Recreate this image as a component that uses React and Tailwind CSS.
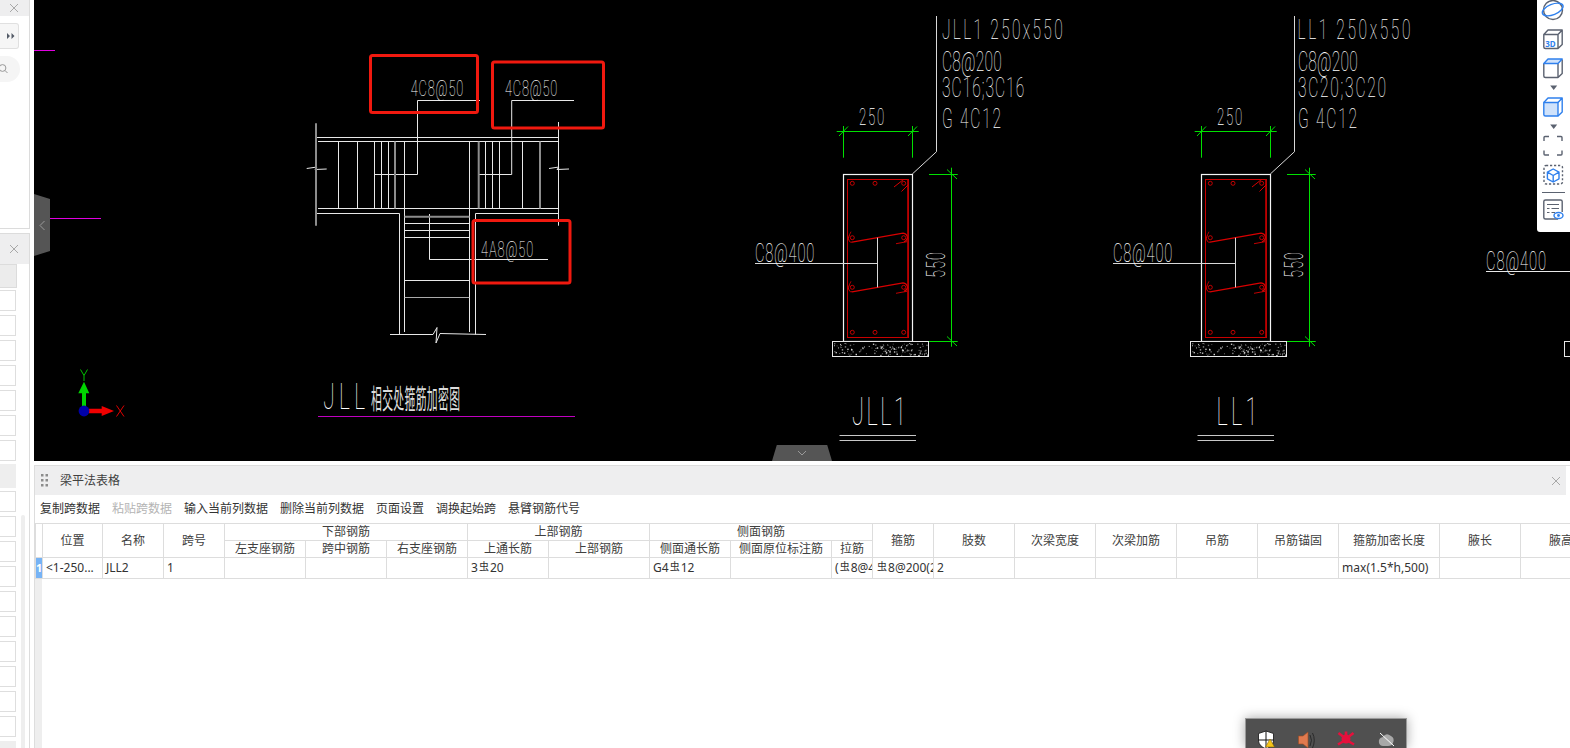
import React from "react";

const W = "#e8e8e8";
const G = "#00e000";
const R = "#d80000";

function T({ x, y, w, h, children, fill = "#ffffff", rotate = 0, weight = 100, s = 0.56, family = "Roboto, 'Noto Sans CJK SC', sans-serif" }) {
  const size = h / 0.72;
  return (
    <text
      x={0}
      y={0}
      fontSize={size}
      fill={fill}
      fontWeight={weight}
      fontFamily={family}
      textLength={w / s}
      lengthAdjust="spacing"
      transform={`translate(${x} ${y}) rotate(${rotate}) scale(${s} 1)`}
    >
      {children}
    </text>
  );
}

const speckle = Array.from({ length: 130 }, (_, i) => {
  const a = Math.abs(Math.sin(i * 12.9898) * 43758.5453) % 1;
  const b = Math.abs(Math.sin(i * 78.233) * 12543.123) % 1;
  return { x: 834 + a * 93, y: 343 + b * 12, s: i % 3 === 0 ? 1.4 : 0.9, o: 0.4 + (i % 5) * 0.12 };
});

function Tie({ y }) {
  return (
    <g fill="none" stroke={R}>
      <path d={`M852 ${y + 4.5} L903 ${y - 4.5} Q907 ${y - 4} 907.5 ${y} Q907 ${y + 3} 904 ${y + 4}`} strokeWidth="1.2" />
      <path d={`M849.5 ${y - 3} Q847.5 ${y + 1} 849 ${y + 3} Q850.5 ${y + 5} 852 ${y + 4.5}`} strokeWidth="1" />
      <path d={`M851 ${y - 6} L849.5 ${y - 3}`} strokeWidth="0.8" />
      <path d={`M896 ${y + 6} L907 ${y + 4}`} strokeWidth="0.9" />
      <circle cx="852.3" cy={y} r="2" strokeWidth="0.9" />
      <circle cx="903.7" cy={y} r="2" strokeWidth="0.9" />
    </g>
  );
}

function Section() {
  return (
    <g>
      <g stroke={G} fill="none" strokeWidth="1">
        <path d="M836.7 131.5H918.7M843.5 126V157.7M912.5 126V157.7M839 136L848 126.5M908 136L917 126.5" />
        <path d="M951.5 167.7V346.7M929 174.5H957.7M929 341.5H957.7M947 169.5L957 179M947 336.5L957 346" />
      </g>
      <path d="M936.5 16V151.7L912.3 174" stroke="#d8d8d8" strokeWidth="1" fill="none" />
      <rect x="843.5" y="174.5" width="69" height="167" stroke="#f4f4f4" strokeWidth="1.2" fill="none" />
      <rect x="847.5" y="179.5" width="61" height="158" stroke="#c80000" strokeWidth="1" fill="none" />
      <path d="M907.8 179.5V337.5" stroke="#b00000" strokeWidth="1.4" />
      <g stroke={R} fill="none" strokeWidth="0.9">
        {[852.3, 875, 903.7].map((x) => (
          <g key={x}>
            <circle cx={x} cy="183.3" r="2" />
            <circle cx={x} cy="332.3" r="2" />
          </g>
        ))}
        <path d="M894 187L903.5 179.5M901.5 191.5L908.5 184.5" strokeWidth="1" />
      </g>
      <Tie y={237.7} />
      <Tie y={287.3} />
      <path d="M755 263.5H877.3M877.5 237.7V287.3" stroke="#d8d8d8" strokeWidth="1" fill="none" />
      <rect x="832.5" y="341.5" width="96" height="15" stroke="#e8e8e8" fill="#000" strokeWidth="1" />
      {speckle.map((d, i) => (
        <rect key={i} x={d.x} y={d.y} width={d.s} height={d.s} fill="#fff" opacity={d.o} />
      ))}
      <path d="M839.5 435.5H916M839.5 440.5H916" stroke="#c8c8c8" strokeWidth="1" />
      <T x={859} y={125} w={25.3} h={17}>250</T>
      <T x={945} y={277.7} w={25.4} h={18} rotate={-90}>550</T>
      <T x={755} y={262} w={59.3} h={19}>C8@400</T>
    </g>
  );
}

function Cad() {
  return (
    <svg width="1536" height="461" viewBox="34 0 1536 461" className="block">
      <path d="M34 50.5H55M50 218.5H101" stroke="#e000e0" strokeWidth="1" />
      <g stroke={W} strokeWidth="1" fill="none">
        <path d="M417.5 100.5H480M417.5 100.5V174.5H374.3M511.7 100.5H574M511.7 100.5V174.5H479" />
        <path d="M429.5 259.5H548M429.5 214V259.5" />
        <path d="M316 137.5H558.3M318 141.5H558.3M318 208.5H558.3M558.5 122V225.7" />
        <path d="M338.5 141.5V208.5M357.5 141.5V208.5M374.5 141.5V208.5M381.5 141.5V208.5M388.5 141.5V208.5M485.5 141.5V208.5M492.5 141.5V208.5M499.5 141.5V208.5M522.5 141.5V208.5" />
        <path d="M404.5 141.5V332M469.5 141.5V332" />
        <path d="M316 213.5H399.5V334.5M475.5 334.5V213.5H558.3" />
        <path d="M404.5 223.5H469.5M404.5 230.5H469.5M404.5 237.5H469.5M404.5 280.5H469.5" />
        <path d="M390 334.5H433L437 327.5L436 343L440 333.5L486 334.5" />
        <path d="M306.7 168.5L317 167L315 169.5L326.7 169M549 168.5L559 167L557 169.5L569 169" />
      </g>
      <g stroke="#8c8c8c" strokeWidth="2" fill="none">
        <path d="M316 123.3V225.7M395 141.5V208.5M478.7 141.5V208.5M540 141.5V208.5M404.5 216.8H469.5" />
      </g>
      <path d="M404.5 297.5H469.5" stroke="#aaa" strokeWidth="1" />
      <g stroke="#f0190f" strokeWidth="3" fill="none">
        <rect x="370.5" y="55.5" width="107" height="57" rx="2" />
        <rect x="492.5" y="62" width="111" height="66" rx="2" />
        <rect x="473" y="220.5" width="97" height="62.5" rx="2" />
      </g>
      <T x={410.7} y={96} w={52.6} h={16.5}>4C8@50</T>
      <T x={505} y={96} w={52.3} h={16.5}>4C8@50</T>
      <T x={481} y={257} w={52.3} h={16.5}>4A8@50</T>
      <T x={323.3} y={409.3} w={41.7} h={27}>JLL</T>
      <T x={371} y={408.5} w={89} h={20} s={0.39} fill="#dcdcdc" weight={400}>相交处箍筋加密图</T>
      <path d="M318 416.5H575" stroke="#c000c0" strokeWidth="1" />

      <Section />
      <T x={942} y={39.3} w={120.7} h={20}>JLL1 250x550</T>
      <T x={942} y={71} w={59.7} h={20}>C8@200</T>
      <T x={942} y={96.7} w={82.3} h={20}>3C16;3C16</T>
      <T x={942} y={128} w={59} h={20}>G 4C12</T>
      <T x={852} y={425} w={54} h={28}>JLL1</T>

      <g transform="translate(358 0)">
        <Section />
      </g>
      <T x={1297.5} y={39.3} w={113} h={20}>LL1 250x550</T>
      <T x={1298} y={71} w={59.7} h={20}>C8@200</T>
      <T x={1298} y={96.7} w={88} h={20}>3C20;3C20</T>
      <T x={1298} y={128} w={59} h={20}>G 4C12</T>
      <T x={1216.5} y={425} w={41} h={28}>LL1</T>

      <T x={1486} y={270} w={60} h={19}>C8@400</T>
      <path d="M1486 271.5H1570" stroke="#e8e8e8" strokeWidth="1" />
      <rect x="1564.5" y="341.5" width="20" height="15" stroke="#e8e8e8" fill="none" />

      <path d="M84 381.7L89.3 393.3H86V406H82V393.3H78.3Z" fill="#00d400" />
      <path d="M89 408.8H101.7V406L114 411L101.7 416V413.2H89Z" fill="#f00000" />
      <circle cx="84" cy="411" r="5.4" fill="#0000a8" />
      <path d="M80.5 369.5L84 375.5L87.5 369.5M84 375.5V381" stroke="#00c000" strokeWidth="1" fill="none" />
      <path d="M116.5 405.5L124 416.5M124 405.5L116.5 416.5" stroke="#e00000" strokeWidth="1" fill="none" />
    </svg>
  );
}

function ToolIcons() {
  const gray = "#5b6270";
  const blue = "#2f80ed";
  return (
    <svg width="33" height="232" viewBox="1537 0 33 232" className="block">
      <g fill="none" strokeWidth="1.4" strokeLinejoin="round">
        <circle cx="1553" cy="10" r="9.5" stroke={gray} />
        <ellipse cx="1552.7" cy="9.5" rx="11" ry="5.2" transform="rotate(-22 1552.7 9.5)" stroke={blue} />

        <path d="M1543.8 34.5L1548 30H1562.2V44.5L1558 48.5H1545.5Q1543.8 48.5 1543.8 47ZM1543.8 34.5H1558V48.5M1558 34.5L1562.2 30" stroke={gray} />

        <path d="M1543.8 63.5V76Q1543.8 77.5 1545.5 77.5H1558V63.5M1558 77.5L1562.2 73.5V59.5" stroke={gray} />
        <path d="M1543.8 63.5L1548 59H1562.2L1558 63.5Z" stroke={blue} fill="#cfe2fb" />

        <path d="M1543.8 102.5H1558V116H1545.5Q1543.8 116 1543.8 114.5Z" stroke={blue} fill="#cfe2fb" />
        <path d="M1543.8 102.5L1548 98H1562.2V112L1558 116M1558 102.5L1562.2 98" stroke={blue} />

        <path d="M1544 141V137.5Q1544 136.5 1545 136.5H1549M1557 136.5H1561Q1562 136.5 1562 137.5V141M1562 150.5V154Q1562 155 1561 155H1557M1549 155H1545Q1544 155 1544 154V150.5" stroke={gray} />

        <rect x="1544" y="165.5" width="18.5" height="18.5" rx="2" stroke={gray} strokeDasharray="2.2 1.8" />
        <path d="M1553.2 169L1559 172.2V178.8L1553.2 182L1547.4 178.8V172.2ZM1547.4 172.2L1553.2 175.5L1559 172.2M1553.2 175.5V182" stroke={blue} />

        <path d="M1558 219H1545.5Q1543.8 219 1543.8 217.5V201.5Q1543.8 200 1545.5 200H1560.5Q1562.2 200 1562.2 201.5V212" stroke={gray} />
        <path d="M1547 204.5H1559M1547 208.5H1549.5M1551.5 208.5H1559M1547 212.5H1549.5M1551.5 212.5H1555" stroke={gray} strokeWidth="1" />
        <ellipse cx="1558.5" cy="215.5" rx="4.5" ry="3" stroke={blue} fill="#fff" />
      </g>
      <circle cx="1558.5" cy="215.5" r="1.4" fill={blue} />
      <text x="1545.3" y="46.5" fontSize="8" fontWeight="700" fill={blue} fontFamily="'Noto Sans', sans-serif">3D</text>
      <path d="M1550.2 85.5H1557.2L1553.7 90ZM1550.2 124.5H1557.2L1553.7 129Z" fill={gray} />
      <path d="M1542 192.5H1565" stroke={gray} strokeWidth="1" />
    </svg>
  );
}

function X({ className }) {
  return (
    <svg width="10" height="10" viewBox="0 0 10 10" className={className}>
      <path d="M1 1L9 9M9 1L1 9" stroke="#a8a8a8" strokeWidth="1" fill="none" />
    </svg>
  );
}

const rowClass = "h-[21px] w-[16px] border border-[#dedede] border-l-0 shrink-0";

function LeftColumn() {
  return (
    <div className="w-[34px] h-full shrink-0 flex flex-col bg-white">
      <div className="w-[30px] h-[229px] border-r border-b border-[#dcdcdc] flex flex-col">
        <div className="h-[16px] bg-[#eeeeef] flex items-end justify-end pr-[10px] pb-[3px] overflow-hidden shrink-0">
          <X />
        </div>
        <div className="mt-[7px] h-[26px] w-[19px] border border-l-0 border-[#e0e0e0] rounded-r-[3px] bg-[#f6f6f6] flex items-center justify-end pr-[3px]">
          <svg width="8" height="6" viewBox="0 0 8 6"><path d="M0 0L3 3L0 6ZM4.5 0L7.5 3L4.5 6Z" fill="#555c68" /></svg>
        </div>
        <div className="mt-[7px] h-[26px] w-[20px] rounded-r-full bg-[#f5f5f5] flex items-center">
          <svg width="9" height="10" viewBox="0 0 9 10"><circle cx="2.5" cy="4" r="3.4" stroke="#999" fill="none" /><path d="M5 6.5L7.5 9" stroke="#999" /></svg>
        </div>
      </div>
      <div className="w-[30px] mt-[4px] flex-1 min-h-0 relative border-r border-t border-[#dcdcdc] flex flex-col overflow-hidden">
        <div className="h-[30px] bg-[#eeeeef] flex items-center justify-end pr-[10px] shrink-0">
          <X />
        </div>
        <div className="h-[24px] w-[17px] bg-[#ececec] border border-l-0 border-[#dcdcdc] shrink-0" />
        <div className="flex flex-col gap-[4px] mt-[2px]">
          {[0, 1, 2, 3, 4, 5, 6].map((i) => <div key={i} className={rowClass} />)}
          <div className="h-[24px] w-[16px] bg-[#eeeeee] shrink-0 mt-[-1px]" />
          <div className="flex flex-col gap-[4px] mt-[-1px]">
            {[0, 1, 2, 3, 4, 5, 6, 7, 8, 9].map((i) => <div key={i} className={rowClass} />)}
          </div>
          <div className="h-[20px] w-[16px] bg-[#eeeeee] shrink-0" />
        </div>
        <div className="absolute left-[21px] top-[281px] bottom-0 w-[4px] bg-[#eeeeee] rounded-t-full" />
      </div>
    </div>
  );
}

const cols = [7, 60, 61, 61, 81, 81, 81, 81, 101, 81, 101, 41, 61, 81, 81, 81, 81, 81, 101, 81, 81];
const bd = "border border-[#dddddd] p-0 overflow-hidden whitespace-nowrap";
const hc = `${bd} text-center font-normal text-[#404040]`;
const dc = `${bd} text-left px-[3px] text-[#333]`;

const Bar = () => <span className="text-[10px] relative top-[-2px] mx-[1px]">虫</span>;

function DataTable() {
  return (
    <table className="table-fixed border-collapse w-[1566px] shrink-0 text-[12px] leading-[16px]">
      <colgroup>
        {cols.map((w, i) => <col key={i} style={{ width: w }} />)}
      </colgroup>
      <thead>
        <tr className="h-[17px]">
          <th rowSpan={2} className={hc}></th>
          <th rowSpan={2} className={hc}>位置</th>
          <th rowSpan={2} className={hc}>名称</th>
          <th rowSpan={2} className={hc}>跨号</th>
          <th colSpan={3} className={hc}>下部钢筋</th>
          <th colSpan={2} className={hc}>上部钢筋</th>
          <th colSpan={3} className={hc}>侧面钢筋</th>
          <th rowSpan={2} className={hc}>箍筋</th>
          <th rowSpan={2} className={hc}>肢数</th>
          <th rowSpan={2} className={hc}>次梁宽度</th>
          <th rowSpan={2} className={hc}>次梁加筋</th>
          <th rowSpan={2} className={hc}>吊筋</th>
          <th rowSpan={2} className={hc}>吊筋锚固</th>
          <th rowSpan={2} className={hc}>箍筋加密长度</th>
          <th rowSpan={2} className={hc}>腋长</th>
          <th rowSpan={2} className={hc}>腋高</th>
        </tr>
        <tr className="h-[17px]">
          {["左支座钢筋", "跨中钢筋", "右支座钢筋", "上通长筋", "上部钢筋", "侧面通长筋", "侧面原位标注筋", "拉筋"].map((t) => (
            <th key={t} className={hc}>{t}</th>
          ))}
        </tr>
      </thead>
      <tbody>
        <tr className="h-[21px]">
          <td className={`${bd} bg-[#76b3f5] text-white font-bold text-center text-[11px]`}>1</td>
          <td className={dc}>&lt;1-250...</td>
          <td className={dc}>JLL2</td>
          <td className={dc}>1</td>
          <td className={dc}></td>
          <td className={dc}></td>
          <td className={dc}></td>
          <td className={dc}>3<Bar />20</td>
          <td className={dc}></td>
          <td className={dc}>G4<Bar />12</td>
          <td className={dc}></td>
          <td className={dc}>(<Bar />8@400</td>
          <td className={dc}><Bar />8@200(2)</td>
          <td className={dc}>2</td>
          <td className={dc}></td>
          <td className={dc}></td>
          <td className={dc}></td>
          <td className={dc}></td>
          <td className={dc}>max(1.5*h,500)</td>
          <td className={dc}></td>
          <td className={dc}></td>
        </tr>
      </tbody>
    </table>
  );
}

function BeamPanel() {
  const actions = ["复制跨数据", "粘贴跨数据", "输入当前列数据", "删除当前列数据", "页面设置", "调换起始跨", "悬臂钢筋代号"];
  return (
    <div className="flex-1 min-h-0 mt-[4px] border-l border-t border-[#dddddd] flex flex-col overflow-hidden bg-white">
      <div className="h-[29px] shrink-0 bg-[#eeeeef] flex items-center mr-[4px]">
        <svg width="8" height="14" viewBox="0 0 8 14" className="ml-[6px]">
          <path d="M0 0h2.5v2.5H0zM4.5 0H7v2.5H4.5zM0 5h2.5v2.5H0zM4.5 5H7v2.5H4.5zM0 10h2.5v2.5H0zM4.5 10H7v2.5H4.5z" fill="#8c8c8c" />
        </svg>
        <span className="ml-[11px] text-[12px] text-[#404040]">梁平法表格</span>
        <X className="ml-auto mr-[5px]" />
      </div>
      <div className="h-[28px] shrink-0 flex items-center gap-[12px] pl-[5px] text-[12px] text-[#333]">
        {actions.map((a, i) => (
          <span key={a} className={i === 1 ? "text-[#b4b4b4]" : ""}>{a}</span>
        ))}
      </div>
      <DataTable />
      <div className="w-[7px] flex-1 bg-[#eeeeee]" />
    </div>
  );
}

function Tray() {
  return (
    <div className="absolute left-[1245px] top-[718px] w-[162px] h-[30px] bg-[#505050] border border-b-0 border-[#9a9a9a] shadow-[0_0_12px_rgba(0,0,0,0.35)]">
      <svg width="160" height="30" viewBox="1246 719 160 30" className="block">
        <path d="M1258.5 733.5L1266 731L1273.5 733.5V741Q1273 746 1266 749Q1259 746 1258.5 741Z" fill="#fff" stroke="#111" strokeWidth="0.8" />
        <path d="M1266 731V749M1258.5 740H1273.5" stroke="#111" strokeWidth="1" />
        <path d="M1270 739L1274.5 747H1265.5Z" fill="#f5c518" stroke="#7a5a00" strokeWidth="0.5" />
        <path d="M1298.5 736H1303L1308 732V748L1303 744H1298.5Z" fill="#e07a4f" stroke="#a04a20" strokeWidth="0.6" />
        <path d="M1310 735Q1313 740 1310 746M1312.5 733Q1316 740 1312.5 748" stroke="#2a2a2a" strokeWidth="1" fill="none" />
        <circle cx="1346" cy="739" r="4.5" fill="#e6103c" />
        <path d="M1338.5 733L1343 736.5M1353.5 733L1349 736.5M1338 744.5L1343 741.5M1354 744.5L1349 741.5M1346 731.5V735" stroke="#e6103c" strokeWidth="2.6" />
        <path d="M1379 743Q1378 738 1383 737Q1386 732 1391 736Q1395 738 1393 743Q1392 746 1388 746H1383Q1380 746 1379 743Z" fill="#a8a8a8" />
        <path d="M1380 733L1394 746" stroke="#fff" strokeWidth="1" />
      </svg>
    </div>
  );
}

export default function App() {
  return (
    <div className="relative w-[1570px] h-[748px] overflow-hidden bg-white flex font-['Noto_Sans','Noto_Sans_CJK_SC',sans-serif]">
      <LeftColumn />
      <div className="flex-1 min-w-0 h-full flex flex-col">
        <div className="relative h-[461px] shrink-0 bg-black overflow-hidden">
          <Cad />
          <div className="absolute left-0 top-[194px] w-[16px] h-[62px] bg-[#555555] rounded-r-[3px] [clip-path:polygon(0_0,100%_8%,100%_92%,0_100%)] flex items-center justify-center">
            <svg width="7" height="11" viewBox="0 0 7 11"><path d="M5.5 1L1 5.5L5.5 10" stroke="#9a9a9a" fill="none" /></svg>
          </div>
          <div className="absolute left-[738px] top-[445px] w-[60px] h-[16px] bg-[#555555] rounded-t-[3px] [clip-path:polygon(8%_0,92%_0,100%_100%,0_100%)] flex items-center justify-center">
            <svg width="10" height="6" viewBox="0 0 10 6"><path d="M1 1L5 5L9 1" stroke="#9a9a9a" fill="none" /></svg>
          </div>
          <div className="absolute right-0 top-0 w-[33px] h-[232px] bg-white rounded-bl-[3px]">
            <ToolIcons />
          </div>
        </div>
        <BeamPanel />
      </div>
      <Tray />
    </div>
  );
}
